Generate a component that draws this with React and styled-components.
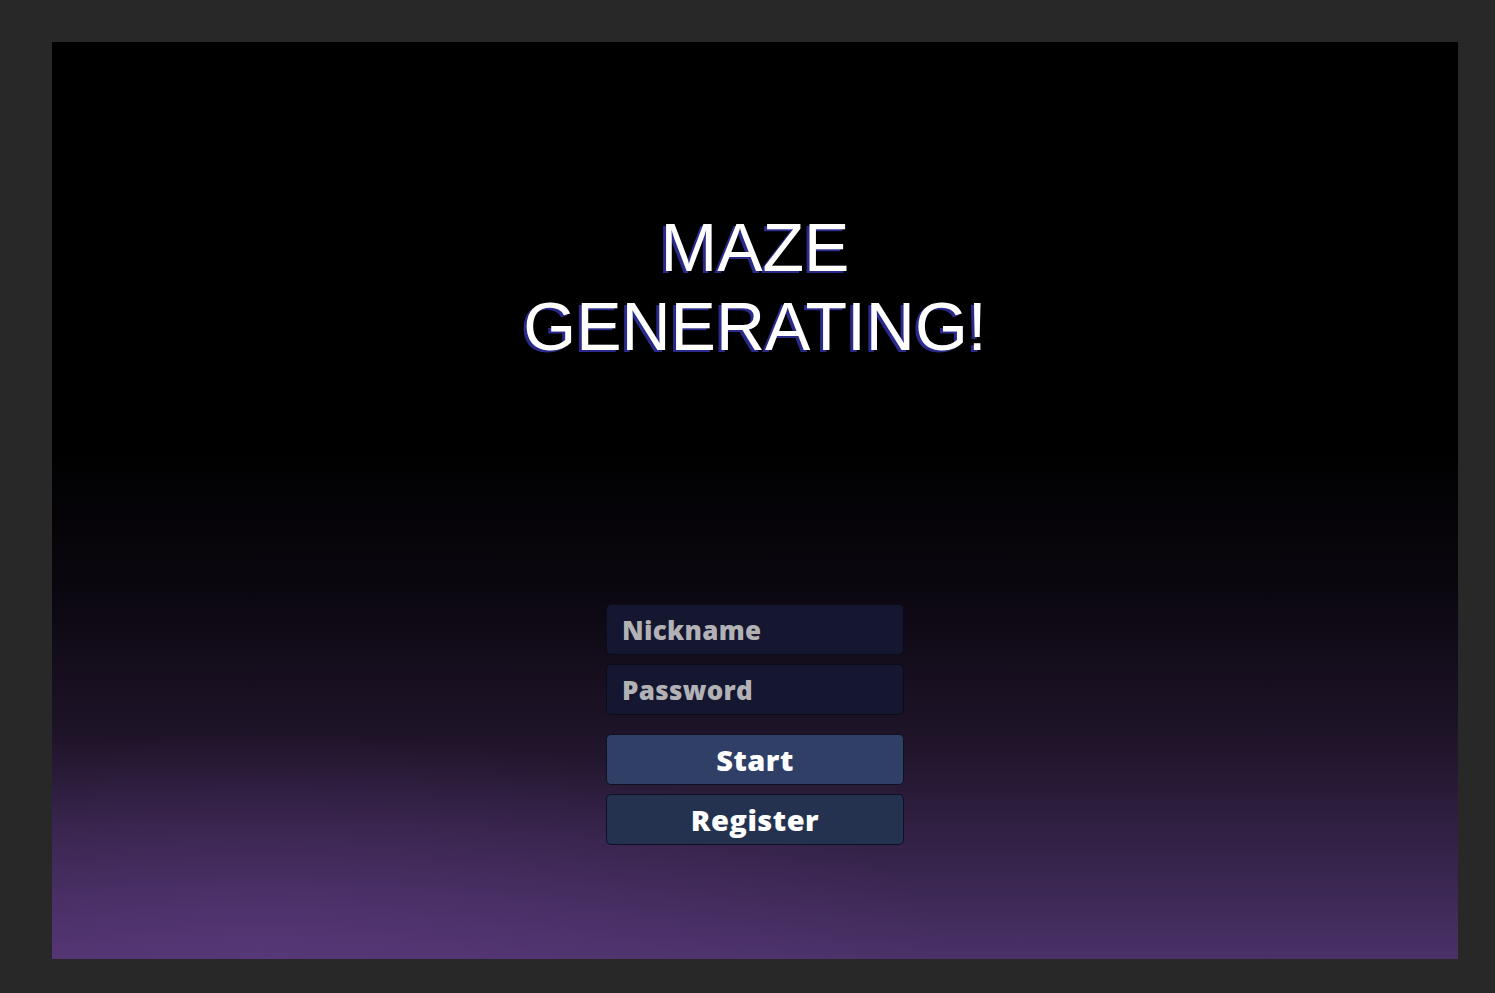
import React from 'react'
import styled, { createGlobalStyle } from 'styled-components'

const GlobalStyle = createGlobalStyle`
  html, body {
    margin: 0;
    background: #282828;
  }
`

const Frame = styled.div`
  padding: 42px 37px 34px 52px;
`

const Screen = styled.main`
  height: 917px;
  display: flex;
  flex-direction: column;
  align-items: center;
  padding-top: 166px;
  box-sizing: border-box;
  background:
    radial-gradient(ellipse 70% 35% at 15% 100%, rgba(100, 62, 135, 0.5), transparent 70%),
    linear-gradient(to bottom, #000 0%, #000 44%, #0b0710 60%, #1f1429 76%, #392650 91%, #4a3168 100%);
`

const Title = styled.h1`
  margin: 0;
  font-family: "Liberation Sans", Arial, sans-serif;
  font-weight: 400;
  font-size: 68px;
  line-height: 79px;
  color: #fff;
  text-align: center;
  text-shadow: -3px 2px 0 #2a2a8a;
`

const Form = styled.form`
  margin-top: 238px;
  width: 298px;
  display: flex;
  flex-direction: column;
  gap: 9px;
`

const Field = styled.input`
  height: 51px;
  box-sizing: border-box;
  padding: 0 15px;
  border: 1px solid #0b0b1c;
  border-radius: 5px;
  background: #15162f;
  font-family: "Open Sans", "Noto Sans", sans-serif;
  font-weight: 800;
  font-size: 26px;
  letter-spacing: 0.3px;
  color: #ddd;
  outline: none;

  &::placeholder {
    color: #b2b2b6;
  }
`

const Button = styled.button`
  height: 51px;
  margin-top: ${(p) => (p.$first ? '10px' : '0')};
  border: 1px solid #0c1224;
  border-radius: 5px;
  background: ${(p) => (p.$first ? '#2f3f66' : '#24324f')};
  font-family: "Open Sans", "Noto Sans", sans-serif;
  font-weight: 800;
  font-size: 29px;
  letter-spacing: 0.5px;
  color: #fff;
  cursor: pointer;
`

const App = () => {
  return (
    <Frame>
      <GlobalStyle />
      <Screen>
        <Title>
          MAZE
          <br />
          GENERATING!
        </Title>
        <Form onSubmit={(e) => e.preventDefault()}>
          <Field placeholder="Nickname" />
          <Field type="password" placeholder="Password" />
          <Button $first type="submit">Start</Button>
          <Button type="button">Register</Button>
        </Form>
      </Screen>
    </Frame>
  )
}

export default App
